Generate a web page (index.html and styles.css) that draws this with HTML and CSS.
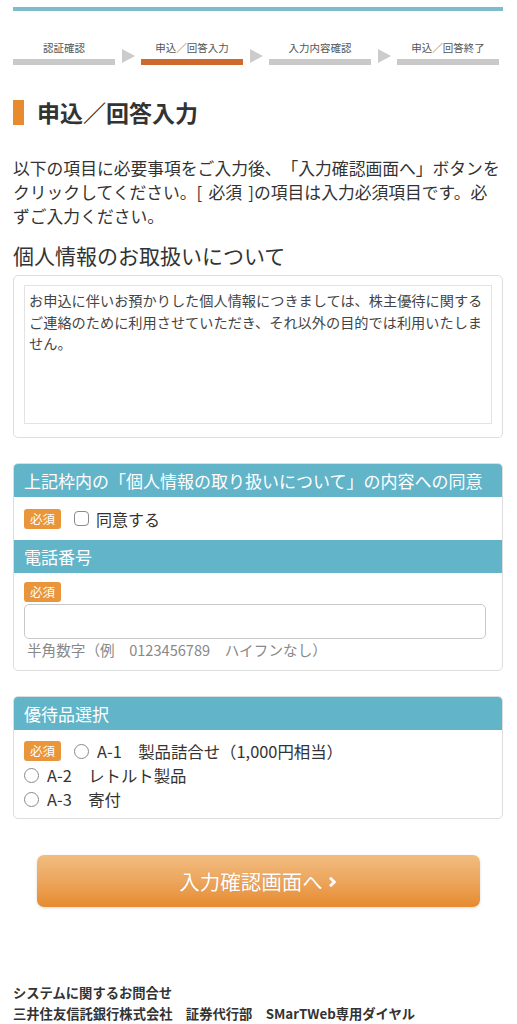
FILE: index.html
```html
<!DOCTYPE html>
<html lang="ja">
<head>
    <meta charset="UTF-8">
    <meta name="viewport" content="width=device-width, initial-scale=1.0">
    <title>申込／回答入力</title>
    <link rel="stylesheet" href="styles.css">
</head>
<body>

<div class="page">
    <div class="topline"></div>

    <!-- Step indicator -->
    <div class="steps">
        <div class="step">
            <div class="step-label">認証確認</div>
            <div class="step-bar"></div>
        </div>
        <div class="step-arrow"></div>
        <div class="step current">
            <div class="step-label">申込／回答入力</div>
            <div class="step-bar"></div>
        </div>
        <div class="step-arrow"></div>
        <div class="step">
            <div class="step-label">入力内容確認</div>
            <div class="step-bar"></div>
        </div>
        <div class="step-arrow"></div>
        <div class="step">
            <div class="step-label">申込／回答終了</div>
            <div class="step-bar"></div>
        </div>
    </div>

    <h1 class="page-title">申込／回答入力</h1>

    <p class="intro">以下の項目に必要事項をご入力後、「入力確認画面へ」ボタンをクリックしてください。[ 必須 ]の項目は入力必須項目です。必ずご入力ください。</p>

    <!-- Privacy -->
    <h2 class="section-title">個人情報のお取扱いについて</h2>
    <div class="privacy-box">
        <div class="privacy-text">お申込に伴いお預かりした個人情報につきましては、株主優待に関するご連絡のために利用させていただき、それ以外の目的では利用いたしません。</div>
    </div>

    <!-- Agreement and phone -->
    <div class="panel">
        <div class="panel-head">上記枠内の「個人情報の取り扱いについて」の内容への同意</div>
        <div class="agree-row">
            <span class="badge">必須</span>
            <input type="checkbox" id="agree" class="check">
            <label for="agree">同意する</label>
        </div>
        <div class="panel-head">電話番号</div>
        <div class="phone-body">
            <span class="badge">必須</span>
            <input type="text" id="phone" class="text-input">
            <div class="hint">半角数字（例　0123456789　ハイフンなし）</div>
        </div>
    </div>

    <!-- Gift selection -->
    <div class="panel">
        <div class="panel-head">優待品選択</div>
        <div class="options">
            <div class="option">
                <span class="badge">必須</span>
                <input type="radio" id="a1" name="gift" class="radio">
                <label for="a1">A-1　製品詰合せ（1,000円相当）</label>
            </div>
            <div class="option">
                <input type="radio" id="a2" name="gift" class="radio">
                <label for="a2">A-2　レトルト製品</label>
            </div>
            <div class="option">
                <input type="radio" id="a3" name="gift" class="radio">
                <label for="a3">A-3　寄付</label>
            </div>
        </div>
    </div>

    <button type="button" class="submit">入力確認画面へ<svg class="chevron" width="9" height="12" viewBox="0 0 9 12"><path d="M2 1.8 L6.3 6 L2 10.2" stroke="#fff" stroke-width="2.8" fill="none"/></svg></button>

    <div class="footer">
        <p>システムに関するお問合せ</p>
        <p>三井住友信託銀行株式会社　証券代行部　SMarTWeb専用ダイヤル</p>
    </div>
</div>

</body>
</html>
```

FILE: styles.css
```css
body {
    margin: 0;
    font-family: "Noto Sans CJK JP", "Noto Sans", sans-serif;
    color: #333;
    background-color: #fff;
    text-spacing-trim: space-all;
}

.page {
    padding: 0 14px 0 13px;
}

.topline {
    height: 4px;
    margin-top: 7px;
    background-color: #7bbdcc;
}

/* Steps */
.steps {
    display: grid;
    grid-template-columns: 1fr 13px 1fr 13px 1fr 13px 1fr;
    column-gap: 6.5px;
    margin: 30px 4px 0 0;
}

.step-label {
    font-size: 10.5px;
    line-height: 14px;
    text-align: center;
    color: #555;
}

.step-bar {
    height: 6px;
    margin-top: 4px;
    background-color: #c9c9c9;
}

.step.current .step-bar {
    background-color: #cf6a2e;
}

.step-arrow {
    width: 0;
    height: 0;
    align-self: end;
    margin-bottom: 2px;
    border-left: 13px solid #cccccc;
    border-top: 7.5px solid transparent;
    border-bottom: 7.5px solid transparent;
}

/* Title */
.page-title {
    display: flex;
    align-items: center;
    gap: 13px;
    margin: 32px 0 0;
    font-size: 23px;
    line-height: 30px;
    font-weight: bold;
    color: #333;
}

.page-title::before {
    content: "";
    width: 11px;
    height: 25px;
    background-color: #e88a2e;
}

.intro {
    margin: 29px 0 0;
    font-size: 16.8px;
    line-height: 24px;
    word-spacing: 2.5px;
}

.section-title {
    margin: 13px 0 5px;
    font-size: 21px;
    line-height: 29px;
    font-weight: normal;
}

.privacy-box {
    border: 1px solid #ddd;
    border-radius: 5px;
    padding: 9px 10px 13px;
}

.privacy-text {
    height: 129px;
    padding: 4px;
    border: 1px solid #e3e3e3;
    font-size: 14.2px;
    line-height: 21.6px;
    color: #444;
}

/* Panels */
.panel {
    margin-top: 25px;
    border: 1px solid #ddd;
    border-radius: 5px;
    overflow: hidden;
}

.panel-head {
    height: 33px;
    line-height: 33px;
    padding: 0 10px;
    background-color: #62b4c9;
    color: #fff;
    font-size: 17px;
}

.badge {
    display: inline-block;
    width: 37px;
    height: 20px;
    line-height: 20px;
    border-radius: 3px;
    background-color: #e8953b;
    color: #fff;
    font-size: 12.5px;
    text-align: center;
}

.agree-row {
    display: flex;
    align-items: center;
    height: 43px;
    padding: 0 10px;
    font-size: 16px;
}

.check {
    appearance: none;
    width: 15px;
    height: 15px;
    margin: 0 7px 0 13px;
    border: 1.5px solid #8a8a8a;
    border-radius: 4px;
    background: #fff;
}

.phone-body {
    padding: 9px 10px 9px;
}

.phone-body .badge {
    display: block;
}

.text-input {
    display: block;
    box-sizing: border-box;
    width: calc(100% - 6px);
    height: 35px;
    margin-top: 2px;
    border: 1px solid #c8c8c8;
    border-radius: 5px;
}

.hint {
    padding-left: 3px;
    font-size: 14.6px;
    line-height: 22px;
    color: #888;
}

.options {
    padding: 9px 10px 7px;
}

.option {
    display: flex;
    align-items: center;
    height: 24px;
    font-size: 16.4px;
}

.radio {
    appearance: none;
    width: 15px;
    height: 15px;
    margin: 0 8px 0 0;
    border: 1.5px solid #8a8a8a;
    border-radius: 50%;
    background: #fff;
}

.option .badge {
    margin-right: 13px;
}

/* Button */
.submit {
    display: flex;
    align-items: center;
    justify-content: center;
    gap: 5px;
    width: 443px;
    height: 52px;
    margin: 36px auto 0;
    border: none;
    border-radius: 7px;
    background: linear-gradient(#f1bd80 0%, #eda861 45%, #e68b30 100%);
    box-shadow: 0 1px 3px rgba(0, 0, 0, 0.15);
    color: #fff;
    font-family: inherit;
    font-size: 20.5px;
    text-shadow: 0 0 1px rgba(150, 80, 20, 0.3);
    cursor: pointer;
}

.chevron {
    margin-top: 2px;
}

.footer {
    margin-top: 75px;
    font-size: 13.3px;
    font-weight: bold;
    line-height: 21px;
}

.footer p {
    margin: 0;
}
```
